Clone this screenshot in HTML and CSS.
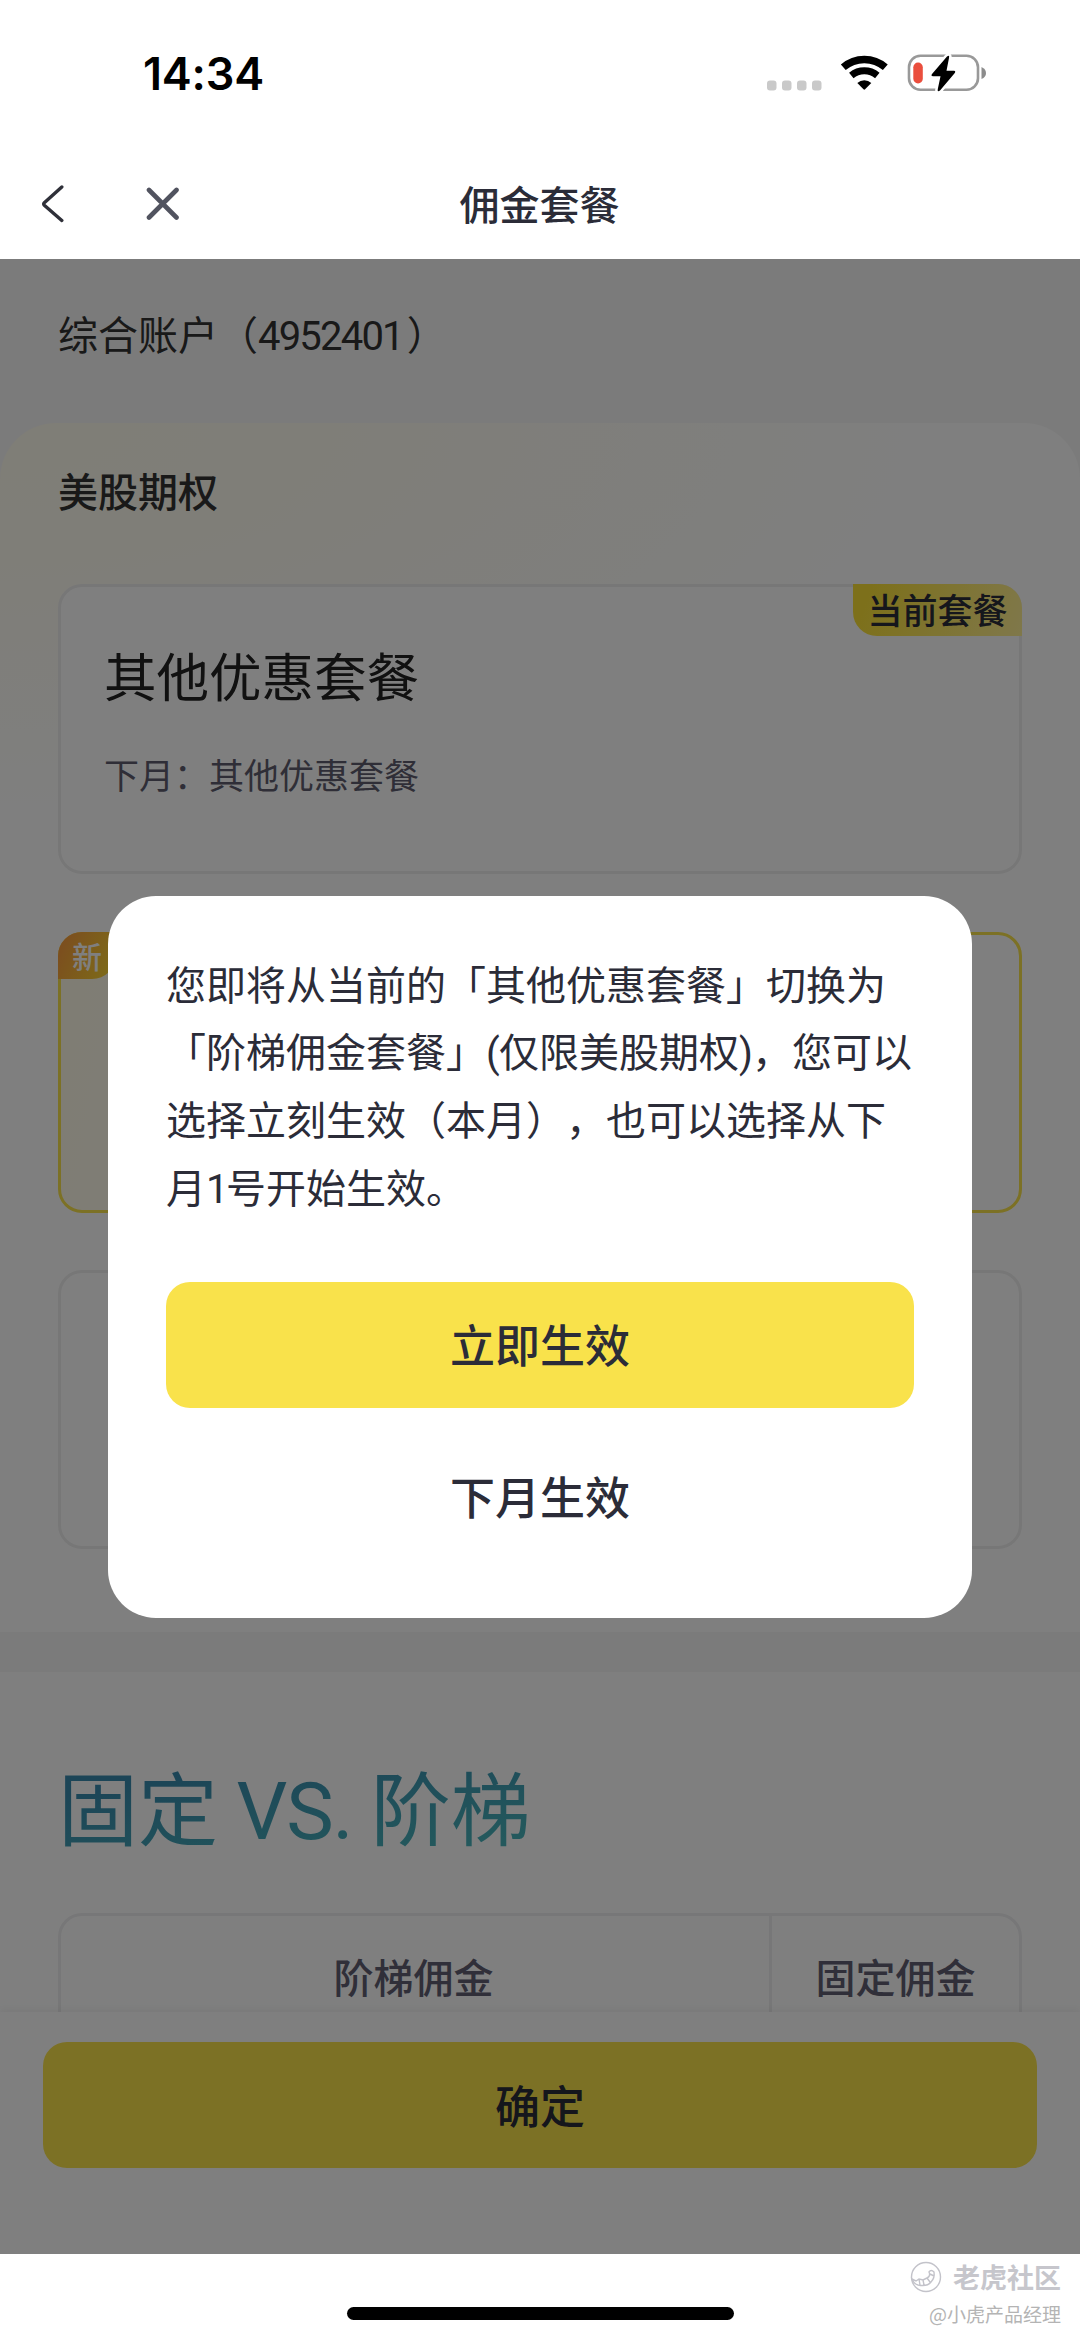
FILE: index.html
```html
<!DOCTYPE html>
<html lang="zh-CN">
<head>
<meta charset="utf-8">
<title>佣金套餐</title>
<link rel="stylesheet" href="styles.css">
</head>
<body>
<div class="screen">
  <header class="top">
    <div class="status">
      <span class="clock">14:34</span>
      <svg class="status-icons" width="220" height="40" viewBox="0 0 220 40">
        <g fill="#c9c9c9"><rect x="0" y="26.500" width="9.500" height="10" rx="3"/><rect x="15" y="26.500" width="9.500" height="10" rx="3"/><rect x="30" y="26.500" width="9.500" height="10" rx="3"/><rect x="45" y="26.500" width="9.500" height="10" rx="3"/></g>
        <g transform="translate(73.300 1)">
          <path d="M3 12.300A32 32 0 0 1 45 12.300" fill="none" stroke="#000" stroke-width="7.400"/>
          <path d="M11 20.500A20.500 20.500 0 0 1 37 20.500" fill="none" stroke="#000" stroke-width="7"/>
          <path d="M17 28A10.500 10.500 0 0 1 31 28L24.800 34.300Q24 35.100 23.200 34.300Z"/>
        </g>
        <rect x="142" y="1.800" width="69" height="34" rx="11.500" fill="none" stroke="#999" stroke-width="2.600"/>
        <path d="M214.500 13Q219 15 219 19Q219 23 214.500 25Z" fill="#8c8c8c"/>
        <rect x="146.300" y="8.500" width="9.500" height="21" rx="4.700" fill="#ea4e3d"/>
        <path d="M180 2.500Q182.800 .5 182 4L179.500 16.800H187Q189 17 187.800 19L173 36.500Q170 38.600 170.800 35L173.500 22.300H166Q163.500 22 165 20Z" stroke="#fff" stroke-width="5" paint-order="stroke"/>
      </svg>
    </div>
    <div class="nav">
      <svg width="24" height="38" viewBox="0 0 24 38" fill="none" stroke="#2f3039" stroke-width="3.400" stroke-linecap="round" stroke-linejoin="round"><path d="M20.800 2L3.300 17.700Q2 19 3.300 20.300L20.800 35.500"/></svg>
      <svg class="close" width="34" height="34" viewBox="0 0 34 34" fill="none" stroke="#51535f" stroke-width="4.600" stroke-linecap="round"><path d="M3 3L30.500 30.500M30.500 3L3 30.500"/></svg>
      <h1 class="nav-title">佣金套餐</h1>
    </div>
  </header>

  <main class="page">
    <div class="account">综合账户（<span class="num">4952401</span>）</div>
    <section class="plans">
      <h2 class="plans-title">美股期权</h2>
      <div class="plan plan-current">
        <span class="tag-current">当前套餐</span>
        <div class="plan-name">其他优惠套餐</div>
        <div class="plan-note">下月：其他优惠套餐</div>
      </div>
      <div class="plan plan-selected"><span class="tag-new">新</span></div>
      <div class="plan plan-other"></div>
    </section>
    <section class="compare">
      <h2 class="compare-title">固定<span class="vs"> VS. </span>阶梯</h2>
      <div class="table"><div class="cell">阶梯佣金</div><div class="cell cell-fixed">固定佣金</div></div>
    </section>
    <footer class="confirm-bar"><button class="btn">确定</button></footer>

    <div class="overlay">
      <div class="dialog">
        <p class="message">您即将从当前的「其他优惠套餐」切换为<br>「阶梯佣金套餐」<span class="paren">(</span>仅限美股期权<span class="paren">)</span>，您可以<br>选择立刻生效（本月），也可以选择从下<br>月<span class="one">1</span>号开始生效。</p>
        <button class="btn">立即生效</button>
        <button class="btn btn-plain">下月生效</button>
      </div>
    </div>
  </main>

  <div class="bottom">
    <div class="home-bar"></div>
    <div class="watermark">
      <div class="brand">
        <svg width="32" height="32" viewBox="0 0 32 32" fill="none" stroke="#c3c3ca" stroke-width="1.400"><circle cx="16" cy="16" r="14.500"/><path d="M2 18Q4 23 8 24Q17 26 21 21Q25 17 24 11Q21 8 19 11Q21 15 17 17L13 19L9 18L6 20Z M9 18L10 24M13 19L14 24M17 17L20 21M20 13L24 15"/></svg>
        <span>老虎社区</span>
      </div>
      <div class="author">@小虎产品经理</div>
    </div>
  </div>
</div>
</body>
</html>
```
FILE: styles.css
```css
* { box-sizing: border-box; }

body {
  margin: 0;
  background: #fff;
  color: #2b2c38;
  font-family: "Noto Sans CJK SC", sans-serif;
  text-spacing-trim: space-all;
}

h1, h2, p { margin: 0; }

.screen {
  display: flex;
  flex-direction: column;
  width: 1080px;
  height: 2340px;
  overflow: hidden;
}

/* status bar and navigation */
.top { height: 259px; flex: none; }

.status {
  display: flex;
  justify-content: space-between;
  align-items: center;
  height: 148px;
  padding: 0 93px 0 143px;
}

.clock {
  font: 600 45px/54px Inter, sans-serif;
  letter-spacing: -.2px;
  color: #000;
}

.nav {
  display: grid;
  grid-template-columns: 105px 118px 1fr 265px;
  align-items: center;
  height: 111px;
  padding-left: 41px;
}

.nav-title {
  padding-bottom: 2px;
  font-size: 40px;
  font-weight: 500;
  line-height: 60px;
  text-align: center;
}

/* page content */
.page {
  position: relative;
  display: flex;
  flex-direction: column;
  height: 1995px;
  flex: none;
  overflow: hidden;
  background: #f7f7f7;
}

.account {
  height: 164px;
  padding: 44px 58px 0;
  font-size: 40px;
  line-height: 60px;
  color: #333;
}

.num {
  margin-right: 4px;
  font-family: Roboto, sans-serif;
  line-height: 0;
  letter-spacing: -1.800px;
}

.plans {
  height: 1209px;
  flex: none;
  padding: 37px 58px 0;
  border-radius: 56px 56px 0 0;
  background: radial-gradient(ellipse 950px 400px at 0 0, #fffcee 0%, #fffcf1 35%, #fff 100%) #fff;
}

.plans-title {
  height: 124px;
  font-size: 40px;
  font-weight: 500;
  line-height: 60px;
  color: #333;
}

.plan {
  position: relative;
  border: 3px solid #efefef;
  border-radius: 24px;
  background: #fff;
}

.plan-current { height: 290px; padding: 48px 43px; }

.plan-name {
  margin-bottom: 35px;
  font-size: 52.500px;
  line-height: 78px;
  color: #222;
}

.plan-note { font-size: 35px; line-height: 52px; color: #5e5d6e; }

.tag-current {
  position: absolute;
  top: -3px;
  right: -3px;
  width: 169px;
  height: 52px;
  border-radius: 0 24px 0 24px;
  background: linear-gradient(110deg, #fbe136 10%, #fff096 100%);
  font-size: 35px;
  font-weight: 500;
  line-height: 50px;
  text-align: center;
}

.plan-selected {
  height: 281px;
  margin-top: 58px;
  border-color: #f9e24b;
  background: linear-gradient(100deg, #fffae8, #fff 70%);
}

.tag-new {
  position: absolute;
  top: -3px;
  left: -3px;
  width: 58px;
  height: 47px;
  border-radius: 24px 0 24px 0;
  background: linear-gradient(115deg, #f8953f, #fbdc30);
  font-size: 30px;
  font-weight: 500;
  line-height: 46px;
  text-align: center;
  color: #fff;
}

.plan-other { height: 279px; margin-top: 57px; }

.compare {
  flex: none;
  height: 400px;
  margin-top: 40px;
  padding: 72px 58px 0;
  background: #fff;
}

.compare-title {
  width: max-content;
  margin-bottom: 49px;
  font-size: 80px;
  font-weight: 400;
  line-height: 120px;
  color: transparent;
  background: linear-gradient(170deg, #388aae 25%, #48b2ba 85%);
  -webkit-background-clip: text;
  background-clip: text;
}

.vs {
  font-family: Roboto, sans-serif;
  line-height: 0;
  letter-spacing: -1.300px;
  white-space: pre;
}

.table {
  display: grid;
  grid-template-columns: 708px 1fr;
  height: 140px;
  border: 3px solid #efeff0;
  border-radius: 24px;
}

.cell {
  padding: 30px 3px 0 0;
  font-size: 40px;
  font-weight: 500;
  line-height: 60px;
  text-align: center;
  color: #605e73;
}

.cell-fixed { padding-right: 0; border-left: 3px solid #efeff0; }

.confirm-bar {
  position: absolute;
  left: 0;
  right: 0;
  bottom: 0;
  height: 242px;
  padding: 30px 43px;
  background: #fff;
  box-shadow: 0 -3px 8px rgba(0, 0, 0, .05);
}

.btn {
  display: block;
  width: 100%;
  height: 126px;
  padding: 0 0 1px;
  border: 0;
  border-radius: 24px;
  background: #f9e24b;
  color: #2b2c38;
  font: 500 45px/66px "Noto Sans CJK SC", sans-serif;
}

/* dialog */
.overlay {
  position: absolute;
  inset: 0;
  display: flex;
  align-items: center;
  justify-content: center;
  background: rgba(0, 0, 0, .5);
}

.dialog {
  width: 864px;
  height: 722px;
  padding: 54px 58px 0;
  border-radius: 48px;
  background: #fff;
}

.message {
  height: 332px;
  font-size: 40px;
  line-height: 67.800px;
  white-space: nowrap;
}

.paren, .one {
  display: inline-block;
  width: 13px;
  font-family: Roboto, sans-serif;
  line-height: 0;
  text-align: center;
}

.one { width: 20px; }

.btn-plain { margin-top: 26px; background: none; }

/* home indicator and watermark */
.bottom { position: relative; flex: 1; padding-top: 53px; }

.home-bar {
  width: 387px;
  height: 13px;
  margin: 0 auto;
  border-radius: 7px;
  background: #000;
}

.watermark {
  position: absolute;
  top: 3px;
  right: 19px;
  display: flex;
  flex-direction: column;
  align-items: flex-end;
}

.brand {
  display: flex;
  align-items: center;
  gap: 11px;
  height: 40px;
  font-size: 27px;
  font-weight: 700;
  line-height: 40px;
  color: #c6c6cc;
}

.author {
  margin-top: 3px;
  font-size: 19px;
  line-height: 28px;
  color: #b4b4b4;
}
```
